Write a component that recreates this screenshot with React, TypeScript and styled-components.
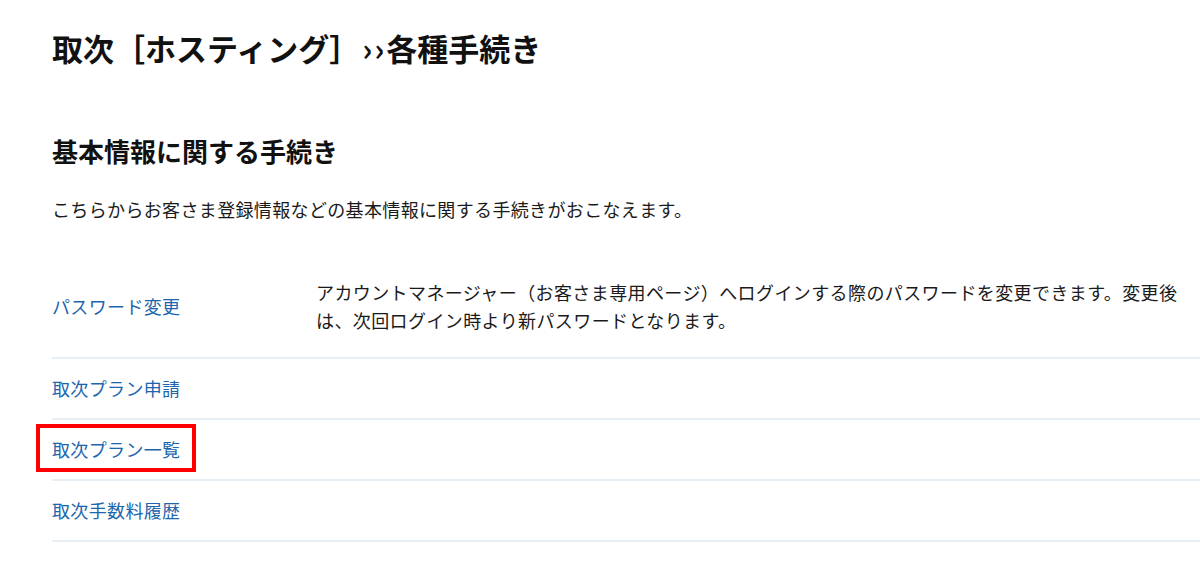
import React from "react";
import styled, { createGlobalStyle } from "styled-components";

const Global = createGlobalStyle`
  html, body { margin: 0; padding: 0; background: #fff; }
  body { font-family: "Noto Sans CJK JP", "Noto Sans", sans-serif; color: #1a1a1a; overflow: hidden; }
`;

const Page = styled.div`
  width: 1200px;
  padding: 26px 0 0 52px;
  box-sizing: border-box;
`;

const Title = styled.h1`
  margin: 0;
  font-size: 31px;
  font-weight: 700;
  line-height: 44px;
  color: #111;
`;

const Guillemet = styled.span`
  letter-spacing: 2px;
  margin-left: 2px;
`;

const SectionTitle = styled.h2`
  margin: 61px 0 0;
  font-size: 26px;
  font-weight: 700;
  line-height: 40px;
  color: #111;
`;

const Lead = styled.p`
  margin: 23px 0 0;
  font-size: 18px;
  line-height: 30px;
  letter-spacing: 0.35px;
  color: #1a1a1a;
`;

const List = styled.div`
  margin-top: 32px;
  width: 1148px;
  display: flex;
  flex-direction: column;
`;

const Row = styled.div`
  display: grid;
  grid-template-columns: 264px 1fr;
  align-items: center;
  border-bottom: 2px solid #e8eff4;
  padding: 15px 0;
  min-height: 29px;
`;

const LinkCell = styled.div`
  position: relative;
`;

const Link = styled.a<{ $marked?: boolean }>`
  position: relative;
  display: inline-block;
  font-size: 18px;
  line-height: 29px;
  letter-spacing: 0.35px;
  color: #1c66ad;
  text-decoration: none;
  ${(p) =>
    p.$marked
      ? `&::after {
          content: "";
          position: absolute;
          left: -16px;
          top: -11px;
          width: 152px;
          height: 40px;
          border: 4px solid #ff0000;
        }`
      : ""}
`;

const Desc = styled.div<{ $filled: boolean }>`
  font-size: 18px;
  line-height: 28px;
  letter-spacing: 0.4px;
  color: #1a1a1a;
  padding: ${(p) => (p.$filled ? "7px 10px 8px 0" : "0")};
`;

const rows = [
  {
    label: "パスワード変更",
    desc: "アカウントマネージャー（お客さま専用ページ）へログインする際のパスワードを変更できます。変更後は、次回ログイン時より新パスワードとなります。",
  },
  { label: "取次プラン申請", desc: "" },
  { label: "取次プラン一覧", desc: "", marked: true },
  { label: "取次手数料履歴", desc: "" },
];

export default function App() {
  return (
    <Page>
      <Global />
      <Title>
        取次［ホスティング］<Guillemet>››</Guillemet>各種手続き
      </Title>
      <SectionTitle>基本情報に関する手続き</SectionTitle>
      <Lead>こちらからお客さま登録情報などの基本情報に関する手続きがおこなえます。</Lead>
      <List>
        {rows.map((r) => (
          <Row key={r.label}>
            <LinkCell>
              <Link href="#" $marked={r.marked}>
                {r.label}
              </Link>
            </LinkCell>
            <Desc $filled={r.desc !== ""}>{r.desc}</Desc>
          </Row>
        ))}
      </List>
    </Page>
  );
}
